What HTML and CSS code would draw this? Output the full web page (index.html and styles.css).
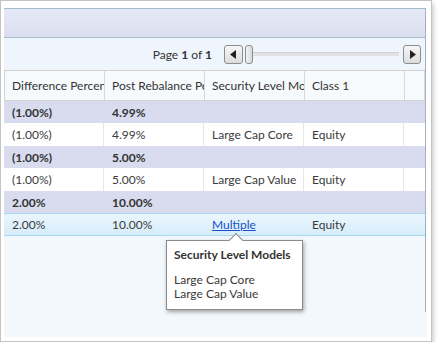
FILE: index.html
```html
<!DOCTYPE html>
<html lang="en">
<head>
    <meta charset="UTF-8">
    <title>Rebalance Grid</title>
    <link rel="stylesheet" href="styles.css">
</head>
<body>
    <div class="frame">
        <div class="panel">
            <div class="toolbar"></div>
            <div class="pager">
                <span class="page-label">Page <b>1</b> of <b>1</b></span>
                <button class="arrow-btn">
                    <svg width="7" height="9" viewBox="0 0 7 9"><path d="M6 0 L0 4.5 L6 9 Z" fill="#222"/></svg>
                </button>
                <span class="thumb"></span>
                <span class="track"></span>
                <button class="arrow-btn next">
                    <svg width="7" height="9" viewBox="0 0 7 9"><path d="M1 0 L7 4.5 L1 9 Z" fill="#222"/></svg>
                </button>
            </div>
            <div class="grid">
                <div class="row head">
                    <div class="cell">Difference Percent</div>
                    <div class="cell">Post Rebalance Percent</div>
                    <div class="cell">Security Level Models</div>
                    <div class="cell">Class 1</div>
                    <div class="cell"></div>
                </div>
                <div class="row group">
                    <div class="cell">(1.00%)</div>
                    <div class="cell">4.99%</div>
                    <div class="cell"></div>
                    <div class="cell"></div>
                    <div class="cell"></div>
                </div>
                <div class="row data">
                    <div class="cell">(1.00%)</div>
                    <div class="cell">4.99%</div>
                    <div class="cell">Large Cap Core</div>
                    <div class="cell">Equity</div>
                    <div class="cell"></div>
                </div>
                <div class="row group">
                    <div class="cell">(1.00%)</div>
                    <div class="cell">5.00%</div>
                    <div class="cell"></div>
                    <div class="cell"></div>
                    <div class="cell"></div>
                </div>
                <div class="row data">
                    <div class="cell">(1.00%)</div>
                    <div class="cell">5.00%</div>
                    <div class="cell">Large Cap Value</div>
                    <div class="cell">Equity</div>
                    <div class="cell"></div>
                </div>
                <div class="row group">
                    <div class="cell">2.00%</div>
                    <div class="cell">10.00%</div>
                    <div class="cell"></div>
                    <div class="cell"></div>
                    <div class="cell"></div>
                </div>
                <div class="row data selected">
                    <div class="cell">2.00%</div>
                    <div class="cell">10.00%</div>
                    <div class="cell"><a href="#" class="link">Multiple</a></div>
                    <div class="cell">Equity</div>
                    <div class="cell"></div>
                </div>
            </div>
        </div>
        <div class="panel-foot"></div>

        <!-- popup for the "Multiple" link -->
        <div class="tooltip">
            <div class="tooltip-title">Security Level Models</div>
            <div>Large Cap Core</div>
            <div>Large Cap Value</div>
        </div>
    </div>
</body>
</html>
```

FILE: styles.css
```css
* {
    box-sizing: border-box;
}
body {
    margin: 0;
    background-color: #ffffff;
    font-family: Lato, "Open Sans", sans-serif;
    font-size: 12px;
    color: #3a3a3a;
}
.frame {
    position: relative;
    width: 432px;
    height: 342px;
    padding: 7px 5px 4px 3px;
    border: 1px solid #c4c4c4;
    background-color: #ffffff;
    box-shadow: 2px 3px 4px rgba(0,0,0,0.18);
}
.panel {
    height: 304px;
    width: 422px;
    border-top: 1px solid #9fbccb;
    border-right: 1px solid #a3b2bd;
    background-color: #f3f8fc;
}
.panel-foot {
    height: 25px;
    width: 423px;
    background-color: #f3f8fc;
}
.toolbar {
    height: 29px;
    background: linear-gradient(#e6e9f5, #dadeef);
    border-bottom: 1px solid #a6bfcc;
}
.pager {
    height: 32px;
    display: flex;
    align-items: center;
    justify-content: flex-end;
    padding-right: 4px;
    background-color: #eef5fc;
}
.page-label {
    margin-right: 12px;
    color: #333;
}
.arrow-btn {
    width: 19px;
    height: 19px;
    padding: 0;
    display: flex;
    align-items: center;
    justify-content: center;
    border: 1px solid #8d8d8d;
    border-radius: 3px;
    background: linear-gradient(#f7f7f7, #dcdcdc);
}
.arrow-btn.next {
    width: 18px;
    margin-left: 4px;
}
.thumb {
    width: 8px;
    height: 19px;
    margin-left: 2px;
    border: 1px solid #8d8d8d;
    border-radius: 3px;
    background: linear-gradient(90deg, #f4f4f4, #d8d8d8);
}
.track {
    width: 146px;
    height: 4px;
    background-color: #e2e2e2;
    border-top: 1px solid #cfcfcf;
}
.grid {
    border-top: 1px solid #d2d2d2;
}
.row {
    display: grid;
    grid-template-columns: 100px 100px 100px 100px 1fr;
}
.cell {
    padding-left: 8px;
    white-space: nowrap;
    overflow: hidden;
    display: flex;
    align-items: center;
}
.head {
    height: 30px;
    background-color: #f7fafd;
    border-bottom: 1px solid #d2d2d2;
    border-left: 1px solid #d2d2d2;
}
.head .cell {
    padding-left: 7px;
    border-right: 1px solid #d8d8d8;
    color: #333;
}
.group {
    height: 22px;
    background-color: #d8dcee;
    font-weight: bold;
    color: #333;
}
.data {
    height: 23px;
    background-color: #ffffff;
}
.data .cell {
    border-right: 1px solid #e6e6e6;
}
.data .cell:last-child {
    border-right: none;
}
.selected {
    background: linear-gradient(#eaf6fd, #d6edfa);
    border-top: 1px solid #a7d8f0;
    border-bottom: 1px solid #a7d8f0;
}
.selected .cell {
    border-right: none;
}
.link {
    color: #1a4fc9;
    text-decoration: underline;
}
.tooltip {
    position: absolute;
    left: 165px;
    top: 239px;
    width: 137px;
    height: 70px;
    padding: 7px 7px 0 7px;
    background-color: #ffffff;
    border: 1px solid #8a8a8a;
    box-shadow: 1px 2px 4px rgba(0,0,0,0.35);
    line-height: 14px;
    color: #3a3a3a;
}
.tooltip::before {
    content: "";
    position: absolute;
    left: 64px;
    top: -6px;
    width: 9px;
    height: 9px;
    background-color: #ffffff;
    border-top: 1px solid #8a8a8a;
    border-left: 1px solid #8a8a8a;
    transform: rotate(45deg);
}
.tooltip-title {
    font-weight: bold;
    color: #333;
    margin-bottom: 11px;
}
```
